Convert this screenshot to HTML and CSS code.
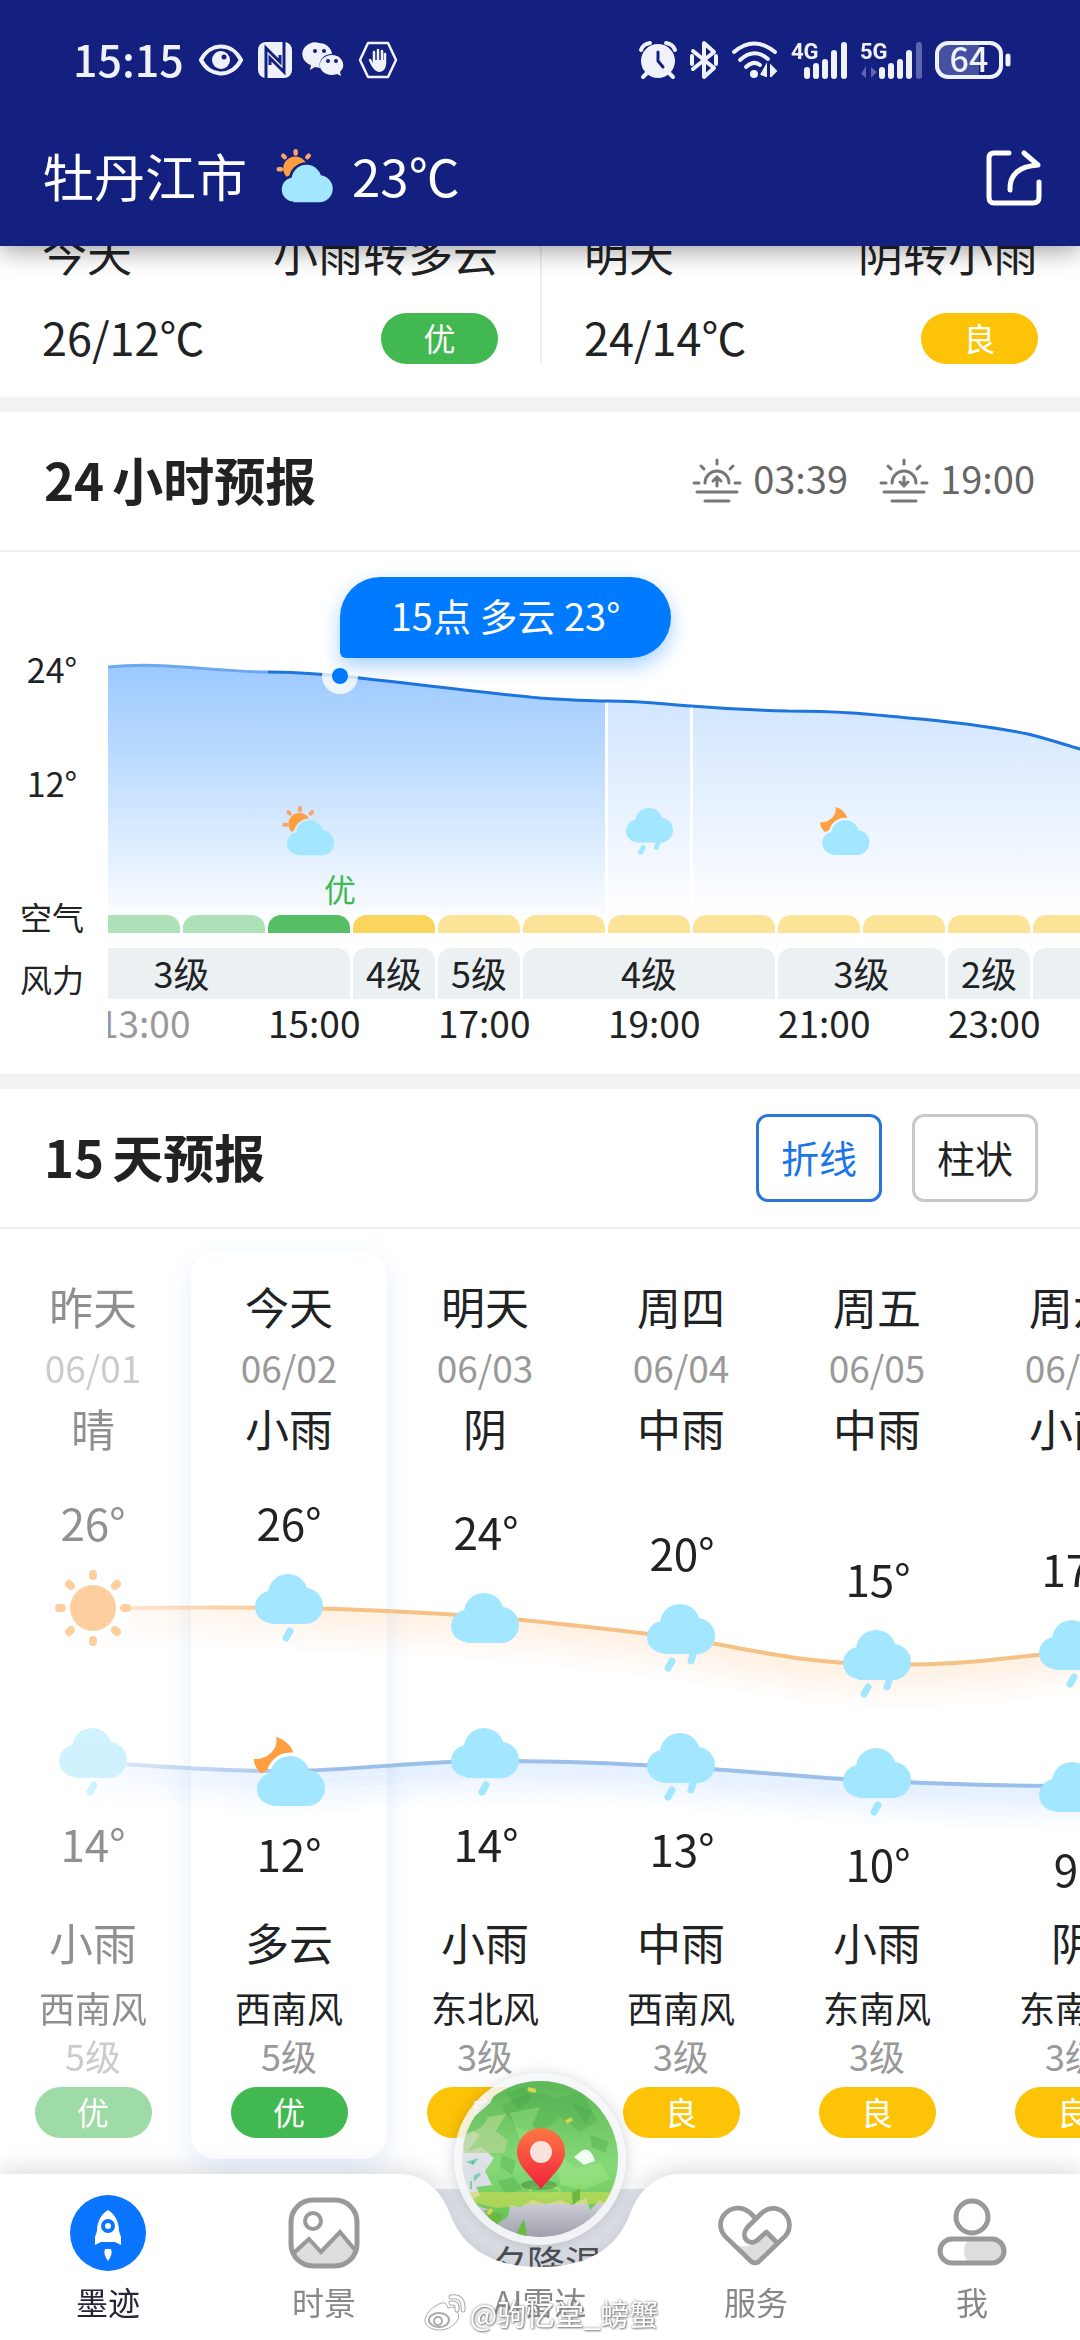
FILE: index.html
```html
<!DOCTYPE html>
<html lang="zh-CN">
<head>
<meta charset="utf-8">
<meta name="viewport" content="width=device-width">
<title>牡丹江市天气</title>
<link rel="stylesheet" href="styles.css">
</head>
<body>
<svg class="defs" aria-hidden="true">
  <defs>
    <g id="cloud-shape"><circle cx="33" cy="20" r="20"/><circle cx="16" cy="33" r="16"/><circle cx="50" cy="32" r="18"/><path d="M13 22H50V50H16L8 40Z"/></g>
    <mask id="sun-cut" maskUnits="userSpaceOnUse" x="0" y="0" width="76" height="72">
      <rect width="76" height="72" fill="#fff"/>
      <use href="#cloud-shape" x="7" y="21" fill="#000" stroke="#000" stroke-width="7"/>
    </mask>
    <mask id="moon-cut" maskUnits="userSpaceOnUse" x="0" y="0" width="76" height="72">
      <rect width="76" height="72" fill="#fff"/>
      <use href="#cloud-shape" x="3" y="19" fill="#000" stroke="#000" stroke-width="7"/>
    </mask>
  </defs>
  <symbol id="w-cloud" viewBox="0 0 68 50"><use href="#cloud-shape" fill="#a3e6ff"/></symbol>
  <symbol id="w-light-rain" viewBox="0 0 68 68"><use href="#cloud-shape" fill="#a3e6ff"/><path d="M35 57L31 64" stroke="#a3e6ff" stroke-width="7" stroke-linecap="round"/></symbol>
  <symbol id="w-rain" viewBox="0 0 68 68"><use href="#cloud-shape" fill="#a3e6ff"/><path d="M25 57L21 64M47 48L44 57" stroke="#a3e6ff" stroke-width="7" stroke-linecap="round"/></symbol>
  <symbol id="w-partly" viewBox="0 0 76 72">
    <circle cx="25" cy="26" r="16" fill="#ff9f42" mask="url(#sun-cut)"/>
    <path d="M25.500 3V6M9 9L11 11M3 27H6M43 9L41 11" stroke="#f5a56e" stroke-width="6" stroke-linecap="round"/>
    <use href="#cloud-shape" x="7" y="21" fill="#a3e6ff"/>
  </symbol>
  <symbol id="w-night" viewBox="0 0 76 72">
    <path d="M22 0C30 2 37 8 39 15L20 34L8 37C3 33 0 28 0 22C12 23 25 13 22 0Z" fill="#ff9f42" mask="url(#moon-cut)"/>
    <use href="#cloud-shape" x="3" y="19" fill="#a3e6ff"/>
  </symbol>
  <symbol id="w-sun" viewBox="0 0 76 76">
    <g fill="none" stroke="#ff9f42" stroke-width="8" stroke-linecap="round"><path d="M38 4V6M38 70V72M4 38H7M69 38H72M14 14L16 16M60 60L62 62M14 62L16 60M60 16L62 14"/></g>
    <circle cx="38" cy="38" r="23" fill="#ff9f42"/>
  </symbol>
</svg>

<header class="top">
  <div class="status">
    <div class="status-group left">
      <span class="clock">15:15</span>
      <svg width="46" height="32" viewBox="0 0 46 32"><path d="M3 16C12 -2 34 -2 43 16C34 34 12 34 3 16Z" fill="none" stroke="#f0f2fb" stroke-width="4"/><circle cx="23" cy="16" r="9" fill="#f0f2fb"/><circle cx="26" cy="13" r="2.500" fill="#13207f"/></svg>
      <svg width="34" height="36" viewBox="0 0 34 36"><rect width="34" height="36" rx="8" fill="#f0f2fb"/><path d="M8 36V6L22 20V13M26 0V30L12 16V23" fill="none" stroke="#13207f" stroke-width="3"/></svg>
      <svg width="38" height="34" viewBox="0 0 38 34"><path d="M13 0a13 12 0 0 1 13 11a12 11 0 0 0-12 14l-5-1-5 3 1-5A12 11 0 0 1 13 0Z" fill="#f0f2fb"/><path d="M26 12a11 10 0 0 1 8 17l1 4-4-2a12 10 0 1 1-5-19Z" fill="#f0f2fb"/><circle cx="9" cy="8" r="2" fill="#13207f"/><circle cx="18" cy="8" r="2" fill="#13207f"/><circle cx="22" cy="18" r="2" fill="#13207f"/><circle cx="30" cy="18" r="2" fill="#13207f"/></svg>
      <svg width="40" height="38" viewBox="0 0 40 38"><path d="M10 2H30L38 19L30 36H10L2 19Z" fill="none" stroke="#f0f2fb" stroke-width="2.500" stroke-linejoin="round"/><path d="M16 20V11M20 19V9M24 20V10M27 22V13M12 19L15 25" stroke="#f0f2fb" stroke-width="2.500" stroke-linecap="round"/><path d="M15 19H28V24Q27 31 21 31Q16 30 14 25Z" fill="#f0f2fb"/></svg>
    </div>
    <div class="status-group">
      <svg width="38" height="38" viewBox="0 0 38 38"><circle cx="19" cy="20" r="17" fill="#f0f2fb"/><path d="M2 9Q4 3 11 2M36 9Q34 3 27 2M8 32L4 36M30 32L34 36" stroke="#f0f2fb" stroke-width="4" stroke-linecap="round"/><path d="M19 11V20L24 26" stroke="#13207f" stroke-width="3" fill="none" stroke-linecap="round"/></svg>
      <svg width="30" height="38" viewBox="0 0 30 38"><path d="M4 10L25 27L15 36V2L25 11L4 28M3 15V23M27 15V23" fill="none" stroke="#f0f2fb" stroke-width="4" stroke-linejoin="round" stroke-linecap="round"/></svg>
      <svg width="48" height="38" viewBox="0 0 48 38"><g fill="none" stroke="#f0f2fb" stroke-width="4" stroke-linecap="round"><path d="M3 11Q23 -6 44 11M9 19Q23 6 37 18M15 26Q23 19 29 24"/></g><circle cx="23" cy="33" r="4" fill="#f0f2fb"/><path d="M30 34L35 25V36M40 36V25L45 30L40 35" fill="#f0f2fb" stroke="#f0f2fb" stroke-width="2"/></svg>
      <svg width="57" height="38" viewBox="0 0 57 38"><text x="0" y="18" class="net">4G</text><path d="M16 29V35M25 25V35M34 21V35M43 12V35M53 4V35" stroke="#f0f2fb" stroke-width="6" stroke-linecap="round"/></svg>
      <svg width="63" height="38" viewBox="0 0 63 38"><text x="0" y="18" class="net">5G</text><path d="M1 33L6 25V37ZM11 26V37L17 31Z" fill="#5c66ae"/><path d="M22 29V35M31 25V35M40 21V35M49 12V35" stroke="#f0f2fb" stroke-width="6" stroke-linecap="round"/><path d="M59 4V35" stroke="#5c66ae" stroke-width="6" stroke-linecap="round"/></svg>
      <svg width="77" height="38" viewBox="0 0 77 38"><path d="M12 3H44V35H12Q3 35 3 26V12Q3 3 12 3Z" fill="#4650a0"/><rect x="2" y="2" width="64" height="34" rx="11" fill="none" stroke="#f0f2fb" stroke-width="4"/><path d="M73 15V23" stroke="#f0f2fb" stroke-width="5" stroke-linecap="round"/><text x="34" y="31" class="battery">64</text></svg>
    </div>
  </div>
  <div class="citybar">
    <span>牡丹江市</span>
    <svg class="city-icon" width="58" height="54"><use href="#w-partly"/></svg>
    <span>23℃</span>
    <button class="share" aria-label="分享"><svg width="56" height="56" viewBox="0 0 56 56"><path d="M23 3H8Q3 3 3 8V47Q3 53 8 53H47Q53 53 53 47V32M24 40Q23 17 52 15L38 3" fill="none" stroke="#fff" stroke-width="5" stroke-linecap="round" stroke-linejoin="round"/></svg></button>
  </div>
</header>

<main>
  <section class="summary">
    <div class="brief">
      <div class="brief-row"><span>今天</span><span>小雨转多云</span></div>
      <div class="brief-row"><span>26/12℃</span><span class="pill good">优</span></div>
    </div>
    <div class="brief">
      <div class="brief-row"><span>明天</span><span>阴转小雨</span></div>
      <div class="brief-row"><span>24/14℃</span><span class="pill fair">良</span></div>
    </div>
  </section>

  <section class="panel">
    <div class="panel-head">
      <h2><span class="num">24</span>小时预报</h2>
      <div class="suntimes">
        <svg width="48" height="46" viewBox="0 0 48 46"><path d="M12 25A12 12 0 0 1 36 25M24 2V6M8 8L11 11M40 8L37 11M1 25H6M42 25H47M4 34H44M12 43H36M24 28V21M20 23L24 19L28 23" fill="none" stroke="#777" stroke-width="3" stroke-linecap="round"/></svg>
        <span>03:39</span>
        <svg class="sunset" width="48" height="46" viewBox="0 0 48 46"><path d="M12 25A12 12 0 0 1 36 25M24 2V6M8 8L11 11M40 8L37 11M1 25H6M42 25H47M4 34H44M12 43H36M24 19V27M20 24L24 28L28 24" fill="none" stroke="#777" stroke-width="3" stroke-linecap="round"/></svg>
        <span>19:00</span>
      </div>
    </div>
    <div class="hourly">
      <div class="axis"><span>24°</span><span>12°</span><span>空气</span><span>风力</span></div>
      <div class="plot">
        <svg class="curve" width="1200" height="363" viewBox="0 0 1200 363">
          <defs>
            <linearGradient id="day-fill" gradientUnits="userSpaceOnUse" x1="0" y1="113" x2="0" y2="363"><stop offset="0" stop-color="#9dc9ff"/><stop offset=".35" stop-color="#b9daff"/><stop offset="1" stop-color="#fafcff"/></linearGradient>
            <linearGradient id="eve-fill" gradientUnits="userSpaceOnUse" x1="0" y1="140" x2="0" y2="363"><stop offset="0" stop-color="#d0e5ff"/><stop offset="1" stop-color="#fefeff"/></linearGradient>
            <path id="temp-line" d="M0 115C20 113 40 113 60 114C95 116 130 120 160 120C185 120 210 122 232 124C300 131 370 140 432 146C460 148 480 149 500 149C540 149 560 153 583 154C620 157 640 158 680 159C730 159 760 162 800 166C860 171 890 176 920 182C940 187 955 192 972 197L1200 250"/>
            <clipPath id="under"><path d="M0 115C20 113 40 113 60 114C95 116 130 120 160 120C185 120 210 122 232 124C300 131 370 140 432 146C460 148 480 149 500 149C540 149 560 153 583 154C620 157 640 158 680 159C730 159 760 162 800 166C860 171 890 176 920 182C940 187 955 192 972 197L1200 250V363H0Z"/></clipPath>
            <clipPath id="past"><rect width="160" height="363"/></clipPath>
            <clipPath id="future"><rect x="160" width="1040" height="363"/></clipPath>
          </defs>
          <g clip-path="url(#under)"><rect width="497" height="363" fill="url(#day-fill)"/><rect x="500" width="82" height="363" fill="url(#eve-fill)"/><rect x="585" width="615" height="363" fill="url(#eve-fill)"/></g>
          <use href="#temp-line" fill="none" stroke="#6ba8ef" stroke-width="3" clip-path="url(#past)"/>
          <use href="#temp-line" fill="none" stroke="#1c74dd" stroke-width="3" clip-path="url(#future)"/>
          <circle cx="232" cy="124" r="18" fill="#fff" opacity=".8"/><circle cx="232" cy="124" r="8" fill="#007aff"/>
          <use href="#w-partly" x="174" y="254" width="53" height="50"/>
          <use href="#w-rain" x="518" y="256" width="47" height="47"/>
          <use href="#w-night" x="712" y="255" width="53" height="50"/>
          <text x="232" y="350" class="air-now">优</text>
        </svg>
        <div class="tip">15点 多云 23°</div>
        <div class="track air"><i></i><i class="g"></i><i class="g"></i><i class="g now"></i><i class="now"></i><i></i><i></i><i></i><i></i><i></i><i></i><i></i><i></i></div>
        <div class="track wind"><span class="s4">3级</span><span>4级</span><span>5级</span><span class="s3">4级</span><span class="s2">3级</span><span>2级</span><span></span></div>
        <div class="track times"><span class="gone">13:00</span><span>15:00</span><span>17:00</span><span>19:00</span><span>21:00</span><span>23:00</span></div>
      </div>
    </div>
  </section>

  <section class="panel">
    <div class="panel-head">
      <h2><span class="num">15</span>天预报</h2>
      <div class="modes"><button class="mode on">折线</button><button class="mode">柱状</button></div>
    </div>
    <div class="daily">
      <div class="days">
        <div class="day past"><b>昨天</b><small>06/01</small><b>晴</b><div class="room"></div><b>小雨</b><span class="dir">西南风</span><span class="level">5级</span><span class="pill good">优</span></div>
        <div class="day today"><b>今天</b><small>06/02</small><b>小雨</b><div class="room"></div><b>多云</b><span class="dir">西南风</span><span class="level">5级</span><span class="pill good">优</span></div>
        <div class="day"><b>明天</b><small>06/03</small><b>阴</b><div class="room"></div><b>小雨</b><span class="dir">东北风</span><span class="level">3级</span><span class="pill fair">良</span></div>
        <div class="day"><b>周四</b><small>06/04</small><b>中雨</b><div class="room"></div><b>中雨</b><span class="dir">西南风</span><span class="level">3级</span><span class="pill fair">良</span></div>
        <div class="day"><b>周五</b><small>06/05</small><b>中雨</b><div class="room"></div><b>小雨</b><span class="dir">东南风</span><span class="level">3级</span><span class="pill fair">良</span></div>
        <div class="day"><b>周六</b><small>06/06</small><b>小雨</b><div class="room"></div><b>阴</b><span class="dir">东南风</span><span class="level">3级</span><span class="pill fair">良</span></div>
      </div>
      <svg class="trend" width="1176" height="453" viewBox="0 0 1176 453">
        <defs>
          <path id="hi" d="M93 149C150 149 230 148 289 149C360 150 420 153 486 158C550 163 610 170 682 179C760 192 800 204 878 205C960 208 1000 198 1074 193L1176 187"/>
          <path id="lo" d="M93 303C150 307 230 313 289 312C360 311 420 302 486 302C560 301 620 305 682 308C760 313 810 319 878 322C940 325 1000 327 1074 327L1176 325"/>
          <linearGradient id="fade" gradientUnits="userSpaceOnUse" x1="93" y1="0" x2="1176" y2="0"><stop offset="0" stop-color="#fff" stop-opacity=".3"/><stop offset=".09" stop-color="#fff" stop-opacity=".6"/><stop offset=".22" stop-color="#fff"/></linearGradient>
          <mask id="fade-mask" maskUnits="userSpaceOnUse" x="0" y="0" width="1176" height="453"><rect x="93" width="1083" height="453" fill="url(#fade)"/></mask>
        </defs>
        <g mask="url(#fade-mask)" fill="none">
          <g stroke="#ff9f42" stroke-width="6"><use href="#hi" y="4" opacity=".14"/><use href="#hi" y="10" opacity=".12"/><use href="#hi" y="16" opacity=".1"/><use href="#hi" y="22" opacity=".08"/><use href="#hi" y="28" opacity=".06"/><use href="#hi" y="34" opacity=".04"/><use href="#hi" y="40" opacity=".02"/></g>
          <g stroke="#4c95ff" stroke-width="6"><use href="#lo" y="4" opacity=".14"/><use href="#lo" y="10" opacity=".13"/><use href="#lo" y="16" opacity=".11"/><use href="#lo" y="22" opacity=".08"/><use href="#lo" y="28" opacity=".06"/><use href="#lo" y="34" opacity=".04"/><use href="#lo" y="40" opacity=".02"/></g>
          <use href="#hi" stroke="#f5c184" stroke-width="4"/>
          <use href="#lo" stroke="#9abfea" stroke-width="4"/>
        </g>
        <circle cx="93" cy="149" r="38" fill="#fff"/><rect x="65" y="280" width="62" height="38" rx="15" fill="#fff"/>
        <g opacity=".5"><use href="#w-sun" x="55" y="111" width="76" height="76"/><use href="#w-light-rain" x="59" y="269" width="68" height="68"/><text x="93" y="82">26°</text><text x="93" y="403">14°</text></g>
        <use href="#w-light-rain" x="255" y="115" width="68" height="68"/><use href="#w-cloud" x="451" y="134" width="68" height="50"/><use href="#w-rain" x="647" y="145" width="68" height="68"/><use href="#w-rain" x="843" y="171" width="68" height="68"/><use href="#w-light-rain" x="1039" y="161" width="68" height="68"/>
        <use href="#w-night" x="254" y="278" width="76" height="72"/><use href="#w-light-rain" x="451" y="269" width="68" height="68"/><use href="#w-rain" x="647" y="274" width="68" height="68"/><use href="#w-light-rain" x="843" y="289" width="68" height="68"/><use href="#w-cloud" x="1039" y="303" width="68" height="50"/>
        <text x="289" y="82">26°</text><text x="486" y="91">24°</text><text x="682" y="112">20°</text><text x="878" y="138">15°</text><text x="1074" y="128">17°</text>
        <text x="289" y="413">12°</text><text x="486" y="403">14°</text><text x="682" y="408">13°</text><text x="878" y="423">10°</text><text x="1074" y="428">9°</text>
      </svg>
    </div>
  </section>
  <section class="notice">夕降温</section>
</main>

<nav class="tabs">
  <div class="tabs-bg"><i></i><svg width="284" height="166" viewBox="0 0 284 166"><path d="M0 0C28 0 44 18 52 40C66 76 96 93 142 93C188 93 218 76 232 40C240 18 256 0 284 0V166H0Z" fill="#fff"/></svg><i></i></div>
  <a class="tab on" href="#home"><svg width="76" height="76" viewBox="0 0 76 76"><circle cx="38" cy="38" r="38" fill="#0a75ff"/><path d="M38 15C46 20 49 28 49 36L51 42V50L45 47H31L25 50V42L27 36C27 28 30 20 38 15Z" fill="#fff"/><circle cx="38" cy="31" r="5" fill="none" stroke="#0a75ff" stroke-width="4"/><path d="M35 54H41Q43 59 38 66Q33 59 35 54Z" fill="#fff"/></svg><span>墨迹</span></a>
  <a class="tab" href="#live"><svg width="76" height="76" viewBox="0 0 76 76"><path d="M7 55L22 42L35 54L54 35L70 53Q66 70 50 71H26Q12 70 7 55Z" fill="#ddd"/><rect x="5" y="5" width="66" height="66" rx="22" fill="none" stroke="#999" stroke-width="5"/><circle cx="27" cy="26" r="8" fill="none" stroke="#999" stroke-width="4"/><path d="M8 58L23 44L35 57L54 37L69 55" fill="none" stroke="#999" stroke-width="4"/></svg><span>时景</span></a>
  <a class="tab radar" href="#radar">
    <svg class="globe" width="200" height="200" viewBox="0 0 200 200">
      <defs><clipPath id="disc"><circle cx="100" cy="100" r="78"/></clipPath>
      <linearGradient id="land" x1="0" y1="0" x2="0" y2="1"><stop offset="0" stop-color="#5cb655"/><stop offset=".6" stop-color="#86d978"/><stop offset="1" stop-color="#66c455"/></linearGradient>
      <linearGradient id="sea" x1="0" y1="0" x2="0" y2="1"><stop offset="0" stop-color="#e4ecec"/><stop offset=".7" stop-color="#dcdde5"/><stop offset="1" stop-color="#9b9da8"/></linearGradient>
      <linearGradient id="pin" x1="0" y1="0" x2="0" y2="1"><stop offset="0" stop-color="#ff7743"/><stop offset="1" stop-color="#f0213d"/></linearGradient></defs>
      <circle cx="100" cy="100" r="86" fill="#f8fafb" opacity=".85"/>
      <g clip-path="url(#disc)">
        <rect x="20" y="20" width="160" height="160" fill="url(#sea)"/>
        <path d="M20 66L34 58L50 44L62 20H182V142L172 136L168 146L160 141L150 151L146 139L132 146L120 141L106 145L92 141L80 148L70 146L68 158L58 164L50 151L38 147L30 142L40 136L36 128L52 126L45 112L54 99L46 92L42 88L28 92L40 76L33 72L20 80Z" fill="url(#land)"/>
        <path d="M22 74Q42 74 48 58L66 55L56 72L68 82L64 94L24 94Z" fill="#b3d593" opacity=".7"/>
        <path d="M62 48Q92 25 116 40L140 32L158 62L140 73L120 58L100 75L75 68Z" fill="#43a649" opacity=".3"/>
        <path d="M70 54L100 48L92 67L112 82L82 87ZM116 94L136 109L160 104L170 120L142 131L120 126Z" fill="#b0ef93" opacity=".35"/>
        <path d="M66 34l18-6 8 12-14 10ZM132 44l20 8-6 14ZM62 96l14 6-4 14-12-8ZM58 122l16-4 8 12-16 6ZM150 76l18 6-2 12-14-6Z" fill="#3f9f45" opacity=".3"/>
        <path d="M134 98L143 91Q151 88 155 102L144 106Z" fill="#f1fff2"/>
        <path d="M28 133H180V145H100L57 149L31 143Z" fill="#dbdf52" opacity=".55"/>
        <path d="M44 151L63 155L56 170ZM76 175L84 160L88 182ZM132 134L140 129V140L133 146Z" fill="#6bb943"/>
        <path d="M29 103l7-2-3 4ZM35 117l5-2-5 5ZM31 122v8" stroke="#79cfb0" stroke-width="2"/>
        <path d="M126 63l6-3M88 30l8 2M48 155l4-5" stroke="#d4d74b" stroke-width="4"/>
        <ellipse cx="105" cy="132" rx="15" ry="5" fill="none" stroke="#a6dd65" stroke-width="2"/>
        <ellipse cx="99" cy="126" rx="18" ry="5" fill="#27682f" opacity=".35"/>
      </g>
      <path d="M101 130C91 117 77 107 77 93A24 24 0 0 1 125 93C125 107 111 117 101 130Z" fill="url(#pin)"/><circle cx="101" cy="93" r="11" fill="#fbe2dc"/>
    </svg>
    <span>AI雷达</span></a>
  <a class="tab" href="#service"><svg width="76" height="76" viewBox="0 0 80 76"><path d="M12 48Q30 58 44 44L52 37L62 49L43 68Q40 71 35 68Z" fill="#ddd"/><path d="M41 24L34 17C16 2-7 23 7 41L35 68Q39 71 43 68L71 41C84 25 64 2 46 17L31 32C22 43 34 53 42 45L51 37L63 49" fill="none" stroke="#999" stroke-width="5" stroke-linejoin="round"/></svg><span>服务</span></a>
  <a class="tab" href="#me"><svg width="76" height="76" viewBox="0 0 76 76"><circle cx="38" cy="22" r="16" fill="none" stroke="#999" stroke-width="5"/><path d="M34 45H60Q70 47 70 57Q68 67 60 67H34Q26 56 34 45Z" fill="#ddd"/><rect x="6" y="44" width="64" height="24" rx="12" fill="none" stroke="#999" stroke-width="5"/></svg><span>我</span></a>
</nav>
<div class="watermark"><svg width="44" height="38" viewBox="0 0 44 38"><path d="M17 10Q24 6 26 14Q34 11 34 17Q39 21 35 27Q28 37 15 36Q2 34 3 25Q6 15 17 10Z" fill="#fff" stroke="#aaa"/><ellipse cx="17" cy="26" rx="10" ry="7" fill="#fff" stroke="#aaa" stroke-width="2"/><circle cx="16" cy="27" r="4" fill="none" stroke="#aaa" stroke-width="2"/><path d="M29 3Q42 1 41 16M29 9Q36 8 35 16" fill="none" stroke="#aaa" stroke-width="5" stroke-linecap="round"/><path d="M29 3Q42 1 41 16M29 9Q36 8 35 16" fill="none" stroke="#fff" stroke-width="3" stroke-linecap="round"/></svg><span>@驹忆堂_螃蟹</span></div>
</body>
</html>
```

FILE: styles.css
```css
* { box-sizing: border-box; }
body {
  margin: 0;
  background: #fff;
  color: #202224;
  font-family: "Noto Sans CJK SC", sans-serif;
  font-size: 44px;
  overflow-x: hidden;
}
button { font-family: inherit; background: none; border: 0; padding: 0; }
svg { display: block; flex: none; overflow: visible; }
.defs { position: absolute; width: 0; height: 0; }

/* Header */
.top {
  position: fixed;
  inset: 0 0 auto;
  z-index: 5;
  background: #13207f;
  color: #fff;
  padding-bottom: 10px;
  box-shadow: 0 4px 24px rgba(0, 0, 0, .4);
}
.status {
  display: flex;
  justify-content: space-between;
  align-items: center;
  height: 120px;
  padding: 0 68px 0 73px;
}
.status-group { display: flex; align-items: center; gap: 12px; }
.status-group.left { gap: 14px; }
.clock { font-size: 43px; font-weight: 500; line-height: 60px; padding-bottom: 4px; color: #f0f2fb; }
.net { font: 700 22px Roboto, sans-serif; fill: #f0f2fb; }
.battery { font-size: 34px; font-weight: 500; fill: #f0f2fb; text-anchor: middle; }
.citybar {
  display: flex;
  align-items: center;
  height: 116px;
  padding: 0 38px 0 43px;
  font-size: 51px;
  line-height: 80px;
}
.citybar span { padding-bottom: 6px; }
.city-icon { margin: 0 18px 4px 29px; }
.share { margin-left: auto; }

/* Two-day summary */
main { padding-top: 226px; }
.summary { display: grid; grid-template-columns: 1fr 1fr; padding-bottom: 33px; font-size: 45px; }
.brief { display: grid; gap: 30px; padding: 0 42px; }
.brief + .brief { border-left: 2px solid #eee; }
.brief-row { display: flex; justify-content: space-between; line-height: 54px; }
.pill {
  width: 117px;
  height: 51px;
  border-radius: 26px;
  color: #fff;
  font-size: 32px;
  line-height: 48px;
  text-align: center;
}
.brief .pill { margin-top: 3px; }
.good { background: #41b950; }
.fair { background: #fdc306; }

/* Panels */
.panel { border-top: 15px solid #f2f2f2; }
.panel-head {
  display: flex;
  justify-content: space-between;
  align-items: center;
  height: 140px;
  padding: 0 42px 0 44px;
  border-bottom: 2px solid #efefef;
}
h2 { margin: 0; font-size: 51px; font-weight: 700; line-height: 80px; padding-bottom: 4px; }
.num { margin-right: 8px; }
.suntimes { display: flex; align-items: center; gap: 12px; color: #666; font-size: 38px; line-height: 60px; padding-right: 3px; }
.suntimes span { padding-bottom: 6px; }
.sunset { margin-left: 20px; }
.modes { display: flex; gap: 30px; }
.mode {
  width: 126px;
  height: 88px;
  border: 3px solid #c8c8c8;
  border-radius: 12px;
  color: #202224;
  font-size: 38px;
  line-height: 80px;
  padding-bottom: 2px;
}
.mode.on { border-color: #2b75d6; color: #1a75e8; }

/* Hourly chart */
.hourly { display: grid; grid-template-columns: 108px 1fr; padding-bottom: 29px; }
.axis {
  display: flex;
  flex-direction: column;
  padding: 94px 4px 0 0;
  font-size: 34px;
  line-height: 46px;
  text-align: center;
}
.axis span:nth-child(2) { margin-top: 68px; }
.axis span:nth-child(3) { margin-top: 87px; font-size: 32px; }
.axis span:nth-child(4) { margin-top: 16px; font-size: 32px; }
.plot { position: relative; overflow: hidden; min-width: 0; }
.air-now { font-size: 32px; fill: #41b950; text-anchor: middle; }
.tip {
  position: absolute;
  left: 232px;
  top: 25px;
  width: 331px;
  height: 81px;
  border-radius: 41px 41px 41px 6px;
  background: #007aff;
  color: #fff;
  font-size: 38px;
  line-height: 76px;
  text-align: center;
  box-shadow: 0 8px 20px rgba(0, 122, 255, .35);
}
.track { display: grid; grid-auto-columns: 82px; grid-auto-flow: column; column-gap: 3px; margin-left: -95px; }
.air i { height: 18px; border-radius: 13px 13px 0 0; background: #fbe398; }
.air .now { background: #fad55e; }
.air .g { background: #afe1b9; }
.air .g.now { background: #56bf66; }
.wind { margin-top: 15px; font-size: 36px; line-height: 48px; text-align: center; }
.wind span { height: 51px; border-radius: 13px 13px 0 0; background: #ebf0f3; }
.s2 { grid-column: span 2; }
.s3 { grid-column: span 3; }
.s4 { grid-column: span 4; }
.times { grid-auto-columns: 167px; margin-left: -10px; font-size: 37px; line-height: 46px; }
.gone { color: #999; }

/* Fifteen-day forecast */
.daily { position: relative; overflow: hidden; padding: 23px 0 30px; }
.days { display: grid; grid-auto-flow: column; grid-auto-columns: 196px; margin-left: -5px; }
.day {
  display: flex;
  flex-direction: column;
  align-items: center;
  padding: 24px 0 21px;
  border-radius: 24px;
  line-height: 61px;
}
.day b { font-weight: 400; }
.day small { font-size: 37px; color: #999; }
.room { height: 453px; }
.dir { margin-top: 10px; font-size: 36px; line-height: 48px; }
.level { margin-bottom: 8px; font-size: 36px; line-height: 48px; color: #999; }
.past { opacity: .5; }
.today { box-shadow: 0 8px 26px rgba(70, 150, 255, .15); }
.trend { position: absolute; left: 0; top: 230px; }
.trend text { font-size: 44px; fill: #202224; text-anchor: middle; }
.notice {
  height: 151px;
  padding: 47px 0 0 12px;
  background: #e3e7ee;
  color: #505358;
  font-size: 38px;
  line-height: 52px;
  text-align: center;
}

/* Bottom tabs */
.tabs {
  position: fixed;
  inset: auto 0 0;
  z-index: 4;
  display: grid;
  grid-template-columns: repeat(5, 1fr);
  height: 166px;
}
.tabs-bg { position: absolute; inset: 0; display: flex; filter: drop-shadow(0 -4px 12px rgba(0, 0, 0, .14)); }
.tabs-bg i { flex: 1; background: #fff; }
.tab {
  position: relative;
  display: flex;
  flex-direction: column;
  align-items: center;
  padding-top: 21px;
  gap: 6px;
  color: #888;
  font-size: 32px;
  line-height: 48px;
  text-decoration: none;
}
.tab.on { color: #222638; }
.radar { padding-top: 103px; }
.globe { position: absolute; left: 50%; top: -115px; margin-left: -100px; filter: drop-shadow(0 2px 8px rgba(0, 0, 0, .2)); }
.watermark {
  position: fixed;
  inset: auto 0 8px;
  z-index: 6;
  display: flex;
  justify-content: center;
  align-items: center;
  gap: 4px;
  color: #fff;
  font-size: 29px;
  line-height: 38px;
  text-shadow: 0 0 3px #777, 1px 1px 2px #888;
}
```
